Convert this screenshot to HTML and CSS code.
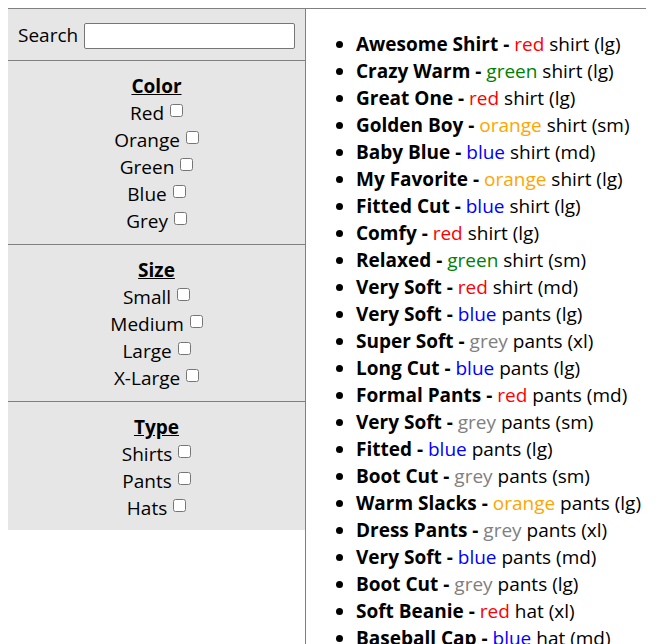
FILE: index.html
```html
<!DOCTYPE html>
<html>
<head>
<meta charset="utf-8">
<link rel="stylesheet" href="styles.css">
</head>
<body>
<div class="app">
  <aside class="sidebar">
    <div class="panel">
      <div class="search">
        <label class="search-label" for="q">Search</label>
        <input class="search-input" id="q" type="text">
      </div>
      <section class="group">
        <div class="group-title">Color</div>
        <label class="opt">Red <input type="checkbox"></label>
        <label class="opt">Orange <input type="checkbox"></label>
        <label class="opt">Green <input type="checkbox"></label>
        <label class="opt">Blue <input type="checkbox"></label>
        <label class="opt">Grey <input type="checkbox"></label>
      </section>
      <section class="group">
        <div class="group-title">Size</div>
        <label class="opt">Small <input type="checkbox"></label>
        <label class="opt">Medium <input type="checkbox"></label>
        <label class="opt">Large <input type="checkbox"></label>
        <label class="opt">X-Large <input type="checkbox"></label>
      </section>
      <section class="group last">
        <div class="group-title">Type</div>
        <label class="opt">Shirts <input type="checkbox"></label>
        <label class="opt">Pants <input type="checkbox"></label>
        <label class="opt">Hats <input type="checkbox"></label>
      </section>
    </div>
  </aside>
  <main class="results">
    <ul class="items">
      <li><b>Awesome Shirt - </b><span class="c-red">red</span> shirt (lg)</li>
      <li><b>Crazy Warm - </b><span class="c-green">green</span> shirt (lg)</li>
      <li><b>Great One - </b><span class="c-red">red</span> shirt (lg)</li>
      <li><b>Golden Boy - </b><span class="c-orange">orange</span> shirt (sm)</li>
      <li><b>Baby Blue - </b><span class="c-blue">blue</span> shirt (md)</li>
      <li><b>My Favorite - </b><span class="c-orange">orange</span> shirt (lg)</li>
      <li><b>Fitted Cut - </b><span class="c-blue">blue</span> shirt (lg)</li>
      <li><b>Comfy - </b><span class="c-red">red</span> shirt (lg)</li>
      <li><b>Relaxed - </b><span class="c-green">green</span> shirt (sm)</li>
      <li><b>Very Soft - </b><span class="c-red">red</span> shirt (md)</li>
      <li><b>Very Soft - </b><span class="c-blue">blue</span> pants (lg)</li>
      <li><b>Super Soft - </b><span class="c-grey">grey</span> pants (xl)</li>
      <li><b>Long Cut - </b><span class="c-blue">blue</span> pants (lg)</li>
      <li><b>Formal Pants - </b><span class="c-red">red</span> pants (md)</li>
      <li><b>Very Soft - </b><span class="c-grey">grey</span> pants (sm)</li>
      <li><b>Fitted - </b><span class="c-blue">blue</span> pants (lg)</li>
      <li><b>Boot Cut - </b><span class="c-grey">grey</span> pants (sm)</li>
      <li><b>Warm Slacks - </b><span class="c-orange">orange</span> pants (lg)</li>
      <li><b>Dress Pants - </b><span class="c-grey">grey</span> pants (xl)</li>
      <li><b>Very Soft - </b><span class="c-blue">blue</span> pants (md)</li>
      <li><b>Boot Cut - </b><span class="c-grey">grey</span> pants (lg)</li>
      <li><b>Soft Beanie - </b><span class="c-red">red</span> hat (xl)</li>
      <li><b>Baseball Cap - </b><span class="c-blue">blue</span> hat (md)</li>
    </ul>
  </main>
</div>
</body>
</html>
```
FILE: styles.css
```css
html, body {
  margin: 0;
  padding: 0;
}
body {
  margin: 8px;
  font-family: "Open Sans", "Noto Sans", sans-serif;
  font-size: 19px;
  line-height: 27px;
  color: #000;
}
.app {
  display: flex;
  width: 638px;
  border-top: 1px solid #808080;
  min-height: 700px;
}
.sidebar {
  width: 297px;
  flex: none;
  border-right: 1px solid #808080;
}
.panel {
  background: #e6e6e6;
}
.search {
  display: flex;
  align-items: center;
  gap: 6px;
  padding: 13px 10px 11px 10px;
  border-bottom: 1px solid #808080;
}
.search-input {
  flex: 1;
  height: 26px;
  box-sizing: border-box;
  border: 1px solid #767676;
  border-radius: 2px;
  background: #fff;
  margin: 0;
}
.group {
  display: flex;
  flex-direction: column;
  align-items: center;
  padding: 12px 0 9px;
  border-bottom: 1px solid #808080;
}
.group.last {
  border-bottom: none;
  padding-bottom: 8px;
}
.group-title {
  font-weight: bold;
  text-decoration: underline;
}
.opt input {
  margin: 0 0 0 1px;
  width: 13px;
  height: 13px;
  vertical-align: 3px;
}
.results {
  flex: 1;
  padding: 0 10px;
}
.items {
  margin: 22px 0 0;
  padding-left: 40px;
  white-space: nowrap;
}
.c-red { color: #ff0000; }
.c-green { color: #008000; }
.c-orange { color: #ffa500; }
.c-blue { color: #0000ff; }
.c-grey { color: #808080; }
```
